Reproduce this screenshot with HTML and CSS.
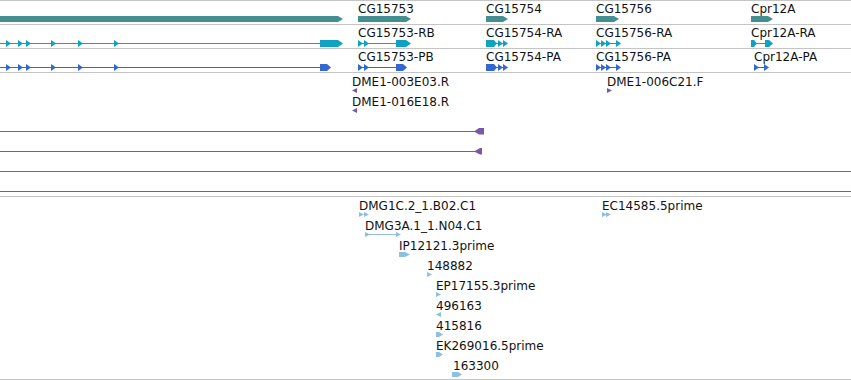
FILE: index.html
```html
<!DOCTYPE html>
<html>
<head>
<meta charset="utf-8">
<link rel="stylesheet" href="styles.css">
</head>
<body>
<div class="view">
  <section class="track track-gene">
    <svg class="glyphs" width="851" height="23" viewBox="0 0 851 23">
      <g class="gene">
        <polygon points="0,15 338,15 343,18 338,21 0,21"/>
        <polygon points="358,15 406,15 411,18 406,21 358,21"/>
        <polygon points="486,15 503,15 508,18 503,21 486,21"/>
        <polygon points="596,15 614,15 619,18 614,21 596,21"/>
        <polygon points="751,15 768,15 773,18 768,21 751,21"/>
      </g>
    </svg>
    <span class="lbl" style="left:358px;top:1px">CG15753</span>
    <span class="lbl" style="left:486px;top:1px">CG15754</span>
    <span class="lbl" style="left:596px;top:1px">CG15756</span>
    <span class="lbl" style="left:751px;top:1px">Cpr12A</span>
  </section>

  <section class="track track-tx">
    <svg class="glyphs" width="851" height="23" viewBox="0 0 851 23">
      <g class="tx">
        <rect x="0" y="18" width="320" height="1"/>
        <polygon points="6,15 11,18.5 6,22"/>
        <polygon points="18,15 23,18.5 18,22"/>
        <polygon points="26,15 31,18.5 26,22"/>
        <polygon points="51,15 56,18.5 51,22"/>
        <polygon points="78,15 83,18.5 78,22"/>
        <polygon points="114,15 119,18.5 114,22"/>
        <polygon points="320,15 338,15 343,18.5 338,22 320,22"/>

        <rect x="358" y="18" width="40" height="1"/>
        <polygon points="358,15 363,18.5 358,22"/>
        <polygon points="364,15 369,18.5 364,22"/>
        <polygon points="396,15 406,15 411,18.5 406,22 396,22"/>

        <rect x="486" y="18" width="20" height="1"/>
        <polygon points="486,15 494,15 497,18.5 494,22 486,22"/>
        <polygon points="498,15 503,18.5 498,22"/>
        <polygon points="503,15 508,18.5 503,22"/>

        <rect x="596" y="18" width="24" height="1"/>
        <polygon points="596,15 601,18.5 596,22"/>
        <polygon points="601,15 606,18.5 601,22"/>
        <polygon points="606,15 611,18.5 606,22"/>
        <polygon points="616,15 621,18.5 616,22"/>

        <rect x="751" y="18" width="18" height="1"/>
        <polygon points="751,15 754,15 757,18.5 754,22 751,22"/>
        <polygon points="765,15 769,15 773,18.5 769,22 765,22"/>
      </g>
    </svg>
    <span class="lbl" style="left:358px;top:1px">CG15753-RB</span>
    <span class="lbl" style="left:486px;top:1px">CG15754-RA</span>
    <span class="lbl" style="left:596px;top:1px">CG15756-RA</span>
    <span class="lbl" style="left:751px;top:1px">Cpr12A-RA</span>
  </section>

  <section class="track track-pep">
    <svg class="glyphs" width="851" height="23" viewBox="0 0 851 23">
      <g class="pep">
        <rect x="0" y="18" width="320" height="1"/>
        <polygon points="6,15 11,18.5 6,22"/>
        <polygon points="18,15 23,18.5 18,22"/>
        <polygon points="26,15 31,18.5 26,22"/>
        <polygon points="51,15 56,18.5 51,22"/>
        <polygon points="78,15 83,18.5 78,22"/>
        <polygon points="114,15 119,18.5 114,22"/>
        <polygon points="320,15 327,15 331,18.5 327,22 320,22"/>

        <rect x="358" y="18" width="40" height="1"/>
        <polygon points="358,15 363,18.5 358,22"/>
        <polygon points="364,15 369,18.5 364,22"/>
        <polygon points="396,15 403,15 407,18.5 403,22 396,22"/>

        <rect x="486" y="18" width="20" height="1"/>
        <polygon points="486,15 494,15 497,18.5 494,22 486,22"/>
        <polygon points="498,15 503,18.5 498,22"/>
        <polygon points="503,15 508,18.5 503,22"/>

        <rect x="596" y="18" width="24" height="1"/>
        <polygon points="596,15 601,18.5 596,22"/>
        <polygon points="601,15 606,18.5 601,22"/>
        <polygon points="606,15 611,18.5 606,22"/>
        <polygon points="616,15 621,18.5 616,22"/>

        <rect x="754" y="18" width="14" height="1"/>
        <polygon points="754,15 759,18.5 754,22"/>
        <polygon points="764,15 769,18.5 764,22"/>
      </g>
    </svg>
    <span class="lbl" style="left:358px;top:1px">CG15753-PB</span>
    <span class="lbl" style="left:486px;top:1px">CG15754-PA</span>
    <span class="lbl" style="left:596px;top:1px">CG15756-PA</span>
    <span class="lbl" style="left:754px;top:1px">Cpr12A-PA</span>
  </section>

  <section class="track track-est">
    <svg class="glyphs" width="851" height="123" viewBox="0 0 851 123">
      <g class="est">
        <polygon points="357,15 352,17.5 357,20"/>
        <polygon points="357,35 352,37.5 357,40"/>
        <polygon points="607,15 612,17.5 607,20"/>

        <rect x="0" y="58" width="478" height="1"/>
        <polygon points="474,58.5 479,55 484,55 484,61.5 479,61.5"/>
        <rect x="0" y="78" width="478" height="1"/>
        <polygon points="474,78.5 480,75 482,75 482,81.5 480,81.5"/>
        <rect x="0" y="98" width="851" height="1"/>
        <rect x="0" y="118" width="851" height="1"/>
      </g>
    </svg>
    <span class="lbl" style="left:352px;top:2px">DME1-003E03.R</span>
    <span class="lbl" style="left:352px;top:22px">DME1-016E18.R</span>
    <span class="lbl" style="left:607px;top:2px">DME1-006C21.F</span>
  </section>

  <section class="track track-cdna">
    <svg class="glyphs" width="851" height="182" viewBox="0 0 851 182">
      <g class="cdna">
        <polygon points="359,15 364,17.5 359,20"/>
        <polygon points="364,15 369,17.5 364,20"/>

        <rect x="365" y="37" width="34" height="1"/>
        <polygon points="365,35 370,37.5 365,40"/>
        <polygon points="396,35 401,37.5 396,40"/>

        <polygon points="399,55 405,55 410,57.5 405,60 399,60"/>
        <polygon points="427,75 432,77.5 427,80"/>
        <polygon points="436,95 441,97.5 436,100"/>
        <polygon points="441,115 436,117.5 441,120"/>
        <polygon points="436,135 439,135 443,137.5 439,140 436,140"/>
        <polygon points="436,155 439,155 443,157.5 439,160 436,160"/>
        <polygon points="452,175 458,175 462,177.5 458,180 452,180"/>

        <polygon points="602,15 607,17.5 602,20"/>
        <polygon points="606,15 611,17.5 606,20"/>
      </g>
    </svg>
    <span class="lbl" style="left:359px;top:2px">DMG1C.2_1.B02.C1</span>
    <span class="lbl" style="left:365px;top:22px">DMG3A.1_1.N04.C1</span>
    <span class="lbl" style="left:399px;top:42px">IP12121.3prime</span>
    <span class="lbl" style="left:427px;top:62px">148882</span>
    <span class="lbl" style="left:436px;top:82px">EP17155.3prime</span>
    <span class="lbl" style="left:436px;top:102px">496163</span>
    <span class="lbl" style="left:436px;top:122px">415816</span>
    <span class="lbl" style="left:436px;top:142px">EK269016.5prime</span>
    <span class="lbl" style="left:453px;top:162px">163300</span>
    <span class="lbl" style="left:602px;top:2px">EC14585.5prime</span>
  </section>
</div>
</body>
</html>
```

FILE: styles.css
```css
html, body {
  margin: 0;
  padding: 0;
  background: #ffffff;
}

body {
  font-family: "DejaVu Sans", Verdana, sans-serif;
  font-size: 12px;
  color: #111111;
  overflow: hidden;
}

.view {
  width: 851px;
  height: 380px;
  display: flex;
  flex-direction: column;
  overflow: hidden;
}

.track {
  position: relative;
  flex: none;
  border-top: 1px solid #c4c4c4;
  overflow: hidden;
}

.track-gene,
.track-tx,
.track-pep {
  height: 23px;
}

.track-est {
  height: 123px;
}

.track-cdna {
  height: 182px;
  border-bottom: 1px solid #c4c4c4;
}

.glyphs {
  position: absolute;
  left: 0;
  top: 0;
  display: block;
}

.lbl {
  position: absolute;
  line-height: 14px;
  white-space: nowrap;
}

.gene { fill: #448f91; }
.tx { fill: #0fa2c2; }
.pep { fill: #3468d0; }
.est { fill: #7759a8; }
.cdna { fill: #8cbfe0; }
```
